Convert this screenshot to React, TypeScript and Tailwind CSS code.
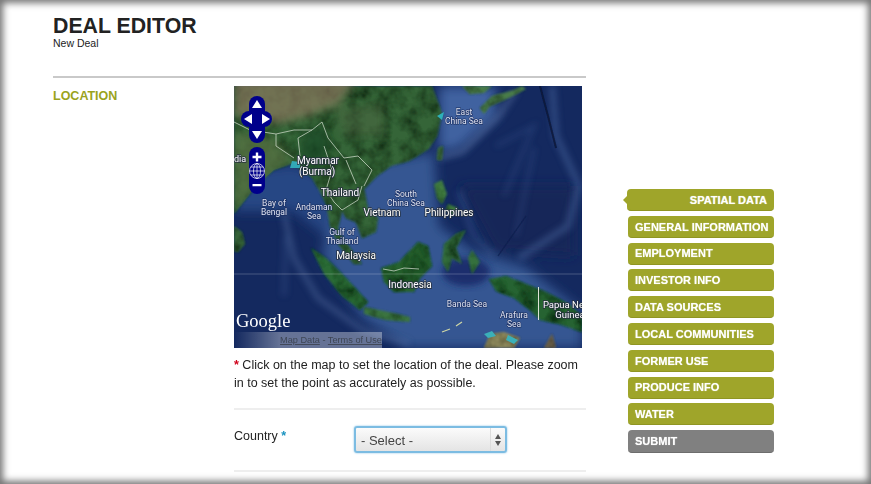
import React from 'react';

const NAV_ITEMS = ['GENERAL INFORMATION', 'EMPLOYMENT', 'INVESTOR INFO', 'DATA SOURCES', 'LOCAL COMMUNITIES', 'FORMER USE', 'PRODUCE INFO', 'WATER'];

const MAP_LABELS = [
  { x: 0, y: 76, text: 'dia', size: 9, anchor: 'start' },
  { x: 84, y: 78, text: 'Myanmar', size: 10, anchor: 'middle' },
  { x: 83, y: 89, text: '(Burma)', size: 10, anchor: 'middle' },
  { x: 106, y: 110, text: 'Thailand', size: 10, anchor: 'middle' },
  { x: 148, y: 130, text: 'Vietnam', size: 10, anchor: 'middle' },
  { x: 215, y: 130, text: 'Philippines', size: 10, anchor: 'middle' },
  { x: 122, y: 173, text: 'Malaysia', size: 10, anchor: 'middle' },
  { x: 176, y: 202, text: 'Indonesia', size: 10, anchor: 'middle' },
  { x: 333, y: 222, text: 'Papua New', size: 9.5, anchor: 'middle' },
  { x: 336, y: 232, text: 'Guinea', size: 9.5, anchor: 'middle' },
];

const SEA_LABELS = [
  { x: 40, y: 120, text: 'Bay of' },
  { x: 40, y: 129, text: 'Bengal' },
  { x: 80, y: 124, text: 'Andaman' },
  { x: 80, y: 133, text: 'Sea' },
  { x: 172, y: 111, text: 'South' },
  { x: 172, y: 120, text: 'China Sea' },
  { x: 230, y: 29, text: 'East' },
  { x: 230, y: 38, text: 'China Sea' },
  { x: 108, y: 149, text: 'Gulf of' },
  { x: 108, y: 158, text: 'Thailand' },
  { x: 233, y: 221, text: 'Banda Sea' },
  { x: 280, y: 232, text: 'Arafura' },
  { x: 280, y: 241, text: 'Sea' },
];

function MapView() {
  return (
    <svg viewBox="0 0 348 262" className="block h-[262px] w-[348px]">
      <defs>
        <filter id="rough" x="-5%" y="-5%" width="110%" height="110%">
          <feGaussianBlur in="SourceGraphic" stdDeviation="1.1" result="base" />
          <feTurbulence type="fractalNoise" baseFrequency="0.07" numOctaves="3" seed="4" result="noise" />
          <feColorMatrix in="noise" type="matrix" values="0 0 0 0 0  0 0 0 0 0  0 0 0 0 0  0 0 0 -1.4 0.95" result="shade" />
          <feComposite in="shade" in2="base" operator="in" result="clipped" />
          <feMerge>
            <feMergeNode in="base" />
            <feMergeNode in="clipped" />
          </feMerge>
        </filter>
        <filter id="soft" x="-10%" y="-10%" width="120%" height="120%"><feGaussianBlur stdDeviation="0.7" /></filter>
        <filter id="ridge" x="-20%" y="-20%" width="140%" height="140%"><feGaussianBlur stdDeviation="3" /></filter>
        <filter id="wide" x="-20%" y="-20%" width="140%" height="140%"><feGaussianBlur stdDeviation="6" /></filter>
        <filter id="patch" x="-20%" y="-20%" width="140%" height="140%"><feGaussianBlur stdDeviation="4" /></filter>
        <filter id="halo" x="-10%" y="-10%" width="120%" height="120%"><feGaussianBlur stdDeviation="0.25" /></filter>
        <linearGradient id="attr" x1="0" y1="0" x2="1" y2="0">
          <stop offset="0" stopColor="#ffffff" stopOpacity="0" />
          <stop offset="1" stopColor="#ffffff" stopOpacity="0.35" />
        </linearGradient>
        <clipPath id="mainland">
          <path d="M0 0 L198 0 L208 27 L203 50 L195 63 L175 75 L157 80 L143 90 L130 103 L134 122 L144 132 L142 146 L128 152 L122 136 L112 132 L108 125 L104 142 L108 150 L116 162 L128 178 L120 178 L104 158 L96 140 L92 118 L85 104 L78 92 L70 85 L57 78 L40 84 L22 100 L8 118 L0 128Z" />
        </clipPath>
      </defs>
      <rect width="348" height="262" fill="#14295f" />

      {/* sea floor */}
      <g filter="url(#wide)">
        <path d="M0 85 L60 78 L100 95 L92 150 L60 125 L0 125Z" fill="#284784" />
        <path d="M125 80 L200 66 L205 140 L240 165 L290 180 L348 225 L348 262 L175 262 L128 232 L88 170 L100 110Z" fill="#355792" />
        <path d="M205 0 L262 0 L262 30 L226 62 L205 66Z" fill="#3f62a0" />
        <path d="M225 100 L340 100 L340 170 L260 165Z" fill="#122558" />
      </g>
      <g fill="none" filter="url(#ridge)">
        <path d="M205 72 L228 66 L265 30 L282 4" stroke="#7f98c6" strokeWidth="6" opacity="0.3" />
        <path d="M50 128 L60 172 L84 212 L128 244 L175 258" stroke="#6e8cbd" strokeWidth="6" opacity="0.3" />
        <path d="M262 60 L300 40 L270 110 M300 62 L282 150" stroke="#4f70ab" strokeWidth="4" opacity="0.22" />
        <path d="M318 0 L322 50 L345 100 L334 140 L285 172" stroke="#6585bd" strokeWidth="7" opacity="0.32" />
        <path d="M52 150 L50 210" stroke="#5c7cb2" strokeWidth="5" opacity="0.2" />
        <path d="M260 170 L240 150 L225 105" stroke="#5b7cb8" strokeWidth="6" opacity="0.25" />
      </g>
      <path d="M306 0 L314 30 L322 62" fill="none" stroke="#081536" strokeWidth="2" opacity="0.8" filter="url(#soft)" />
      <path d="M292 130 L264 170" fill="none" stroke="#0b1c4c" strokeWidth="1.2" opacity="0.7" filter="url(#soft)" />
      <ellipse cx="232" cy="186" rx="24" ry="14" fill="#1a2f6d" filter="url(#ridge)" />

      {/* land */}
      <g filter="url(#rough)">
        <path d="M0 0 L198 0 L208 27 L203 50 L195 63 L175 75 L157 80 L143 90 L130 103 L134 122 L144 132 L142 146 L128 152 L122 136 L112 132 L108 125 L104 142 L108 150 L116 162 L128 178 L120 178 L104 158 L96 140 L92 118 L85 104 L78 92 L70 85 L57 78 L40 84 L22 100 L8 118 L0 128Z" fill="#356538" />
        <path d="M0 140 L8 146 L11 158 L4 166 L0 165Z" fill="#3a6b3c" />
        <path d="M77 162 L92 172 L112 192 L134 216 L126 224 L108 210 L90 188Z" fill="#2b6a35" />
        <path d="M130 221 L150 225 L176 231 L176 236 L152 234 L130 228Z" fill="#3b7340" />
        <path d="M147 182 L165 176 L184 156 L194 160 L198 180 L186 192 L180 206 L160 206 L150 196Z" fill="#27622f" />
        <path d="M222 148 L232 144 L222 162 L228 178 L218 172 L214 186 L208 176 L210 158Z" fill="#34703c" />
        <path d="M238 164 L246 176 L238 188 L234 172Z" fill="#34703c" />
        <path d="M255 193 L272 190 L292 198 L312 206 L335 218 L348 230 L348 246 L325 238 L306 234 L296 224 L280 212 L262 205Z" fill="#266331" />
        <path d="M200 98 L208 94 L213 108 L208 118 L203 112Z M214 118 L224 122 L218 130 L212 124Z" fill="#3f7b40" />
        <path d="M204 62 L209 60 L208 74 L203 74Z" fill="#467a46" />
        <path d="M228 0 L258 0 L250 7 L236 8Z M246 22 L258 10 L280 4 L288 0 L292 3 L275 12 L256 20 L250 28Z" fill="#4a7c48" />
        <path d="M250 262 L256 248 L270 246 L286 252 L280 262Z" fill="#8f8a5d" />
        <path d="M310 262 L318 248 L322 262Z" fill="#776c52" />
      </g>
      {/* terrain tint, clipped to the mainland */}
      <g clipPath="url(#mainland)">
        <g filter="url(#patch)" opacity="0.7">
          <path d="M0 -10 L125 -10 L105 18 L75 30 L45 38 L0 30Z" fill="#8c7a60" />
          <path d="M0 45 L40 52 L58 74 L30 95 L0 125Z" fill="#5a7344" />
          <path d="M72 46 L90 40 L96 58 L90 78 L78 90 L68 82 L64 60Z" fill="#1f4d2a" />
          <path d="M100 22 L150 18 L150 50 L110 50Z" fill="#4e6a45" opacity="0.7" />
        </g>
      </g>
      <g filter="url(#soft)">
        <path d="M58 75 L66 76 L66 82 L56 82Z" fill="#31a8b5" />
        <path d="M203 30 L210 26 L208 34Z" fill="#2fb0b9" />
        <path d="M250 248 L258 245 L262 250 L254 252Z M274 249 L284 254 L280 258 L272 254Z" fill="#3bb0b8" />
        <path d="M222 240 L228 236 M208 246 L216 243" stroke="#cfd7a5" strokeWidth="1.2" />
      </g>

      {/* borders */}
      <g fill="none" stroke="#dfe8da" strokeWidth="0.8" opacity="0.85">
        <path d="M0 36 L16 44 L42 48 L60 44 L78 44 L88 36 L94 52 L110 72 L124 70 L138 84 L130 100" />
        <path d="M42 48 L42 60 L60 72 M78 44 L64 52 L66 70" />
        <path d="M90 60 L98 84 L92 104 L100 116 L108 124 L124 114 L128 100 M112 74 L122 98" />
        <path d="M149 183 L160 185 L170 182 L185 183" />
      </g>
      <path d="M0 188 H348" stroke="#ffffff" strokeOpacity="0.22" strokeWidth="1" />
      <path d="M304.5 201 V234" stroke="#dfe3d8" strokeWidth="1" />

      {/* labels */}
      <g fontFamily="Roboto, sans-serif" filter="url(#halo)">
        {MAP_LABELS.map((l) => (
          <text key={l.text} x={l.x} y={l.y} fontSize={l.size} fill="#ffffff" stroke="#26303f" strokeWidth="1.6" paintOrder="stroke" textAnchor={l.anchor as 'start' | 'middle'}>{l.text}</text>
        ))}
        {SEA_LABELS.map((l) => (
          <text key={l.text + l.y} x={l.x} y={l.y} fontSize="8.5" fill="#dfe5f5" stroke="#1b2c5c" strokeWidth="1.2" paintOrder="stroke" textAnchor="middle">{l.text}</text>
        ))}
      </g>

      {/* pan and zoom controls */}
      <rect x="15" y="10" width="16" height="47" rx="8" fill="#00008b" />
      <rect x="7" y="25" width="31" height="16" rx="8" fill="#00008b" />
      <rect x="15" y="61" width="16" height="47" rx="8" fill="#00008b" />
      <path d="M23 14 L28 22 H18Z M23 53 L28 45 H18Z M10 33 L18 28 V38Z M36 33 L28 28 V38Z" fill="#ffffff" />
      <path d="M21.8 66.5 h2.4 v3.3 h3.3 v2.4 h-3.3 v3.3 h-2.4 v-3.3 h-3.3 v-2.4 h3.3Z M18.5 98 h9 v2.2 h-9Z" fill="#ffffff" />
      <g fill="none" stroke="#ffffff" strokeWidth="0.7">
        <circle cx="23" cy="85" r="7.5" />
        <ellipse cx="23" cy="85" rx="3.5" ry="7.5" />
        <path d="M23 77.5 V92.5 M15.5 85 H30.5 M17 81 H29 M17 89 H29" />
      </g>

      {/* attribution */}
      <text x="2" y="241" fontFamily="'Liberation Serif', serif" fontSize="18.5" fill="#ffffff">Google</text>
      <rect x="0" y="246" width="46" height="16" fill="url(#attr)" />
      <rect x="46" y="246" width="102" height="16" fill="#ffffff" fillOpacity="0.35" />
      <text x="46" y="257" fontFamily="'Liberation Sans', sans-serif" fontSize="9.2" fill="#3f4654">
        <tspan textDecoration="underline">Map Data</tspan> - <tspan textDecoration="underline">Terms of Use</tspan>
      </text>
    </svg>
  );
}

function NavButton({ label }: { label: string }) {
  return (
    <div className="flex h-[22px] items-center rounded-[4px] border-b border-[#8f9522] bg-[#9fa52a] pt-[1px] pl-[7px] text-[11px] font-bold whitespace-nowrap text-white [text-shadow:0_0_1px_rgba(255,255,255,0.7)]">
      {label}
    </div>
  );
}

export default function App() {
  return (
    <div className="flex h-[484px] w-[871px] overflow-hidden bg-white font-['Liberation_Sans',Arial,sans-serif] text-[#222] shadow-[inset_0_0_7px_3px_rgba(0,0,0,0.55)]">
      <main className="ml-[53px] w-[533px] shrink-0 pt-[15px]">
        <h1 className="text-[21.3px] leading-[22px] font-bold text-[#222]">DEAL EDITOR</h1>
        <p className="text-[10.5px] leading-[12px] text-[#222]">New Deal</p>
        <div className="mt-[27px] h-[2px] bg-[#c9c9c9]" />

        <section className="mt-[8px] flex">
          <h2 className="w-[181px] shrink-0 pt-[2px] text-[12.5px] leading-[16px] font-bold text-[#9aa31c]">LOCATION</h2>
          <div className="w-[352px]">
            <MapView />
            <p className="mt-[8px] text-[12.5px] leading-[18px] text-[#222]">
              <span className="font-bold text-[#d0021b]">*</span> Click on the map to set the location of the deal. Please zoom in to set the point as accurately as possible.
            </p>
            <div className="mt-[16px] h-[2px] bg-[#eeeeee]" />
            <div className="flex h-[60px] items-start">
              <label className="w-[120px] shrink-0 pt-[17px] text-[12.5px] leading-[18px] text-[#222]">
                Country <span className="font-bold text-[#1a93c0]">*</span>
              </label>
              <div className="relative mt-[16px] h-[27px] w-[153px] rounded-[3px] border-2 border-[#7cbce2] bg-gradient-to-b from-[#fbfbfb] to-[#e4e4e4] shadow-[0_0_2px_#7cbce2]">
                <select className="h-full w-full appearance-none bg-transparent pb-[2px] pl-[5px] text-[13px] text-[#444] outline-none">
                  <option>- Select -</option>
                </select>
                <div className="pointer-events-none absolute top-0 right-0 flex h-full w-[15px] flex-col items-center justify-center gap-[2px] border-l border-[#dcdcdc]">
                  <div className="h-0 w-0 border-x-[3px] border-b-[5px] border-x-transparent border-b-[#555]" />
                  <div className="h-0 w-0 border-x-[3px] border-t-[5px] border-x-transparent border-t-[#555]" />
                </div>
              </div>
            </div>
            <div className="h-[2px] bg-[#eeeeee]" />
          </div>
        </section>
      </main>

      <nav className="mt-[189px] ml-[42px] flex w-[146px] shrink-0 flex-col gap-[4.8px]">
        <div className="relative -ml-px flex h-[22px] items-center justify-end rounded-[4px] border-b border-[#8f9522] bg-[#9fa52a] pt-[1px] pr-[7px] text-[11px] font-bold text-white [text-shadow:0_0_1px_rgba(255,255,255,0.7)]">
          <span className="absolute top-[7px] -left-[4px] h-0 w-0 border-y-[4px] border-r-[4px] border-y-transparent border-r-[#9fa52a]" />
          SPATIAL DATA
        </div>
        {NAV_ITEMS.map((item) => (
          <NavButton key={item} label={item} />
        ))}
        <div className="flex h-[23px] items-center rounded-[4px] border-b border-[#6d6d6d] bg-[#808080] pt-[1px] pl-[7px] text-[11px] font-bold text-white [text-shadow:0_0_1px_rgba(255,255,255,0.7)]">
          SUBMIT
        </div>
      </nav>
    </div>
  );
}
